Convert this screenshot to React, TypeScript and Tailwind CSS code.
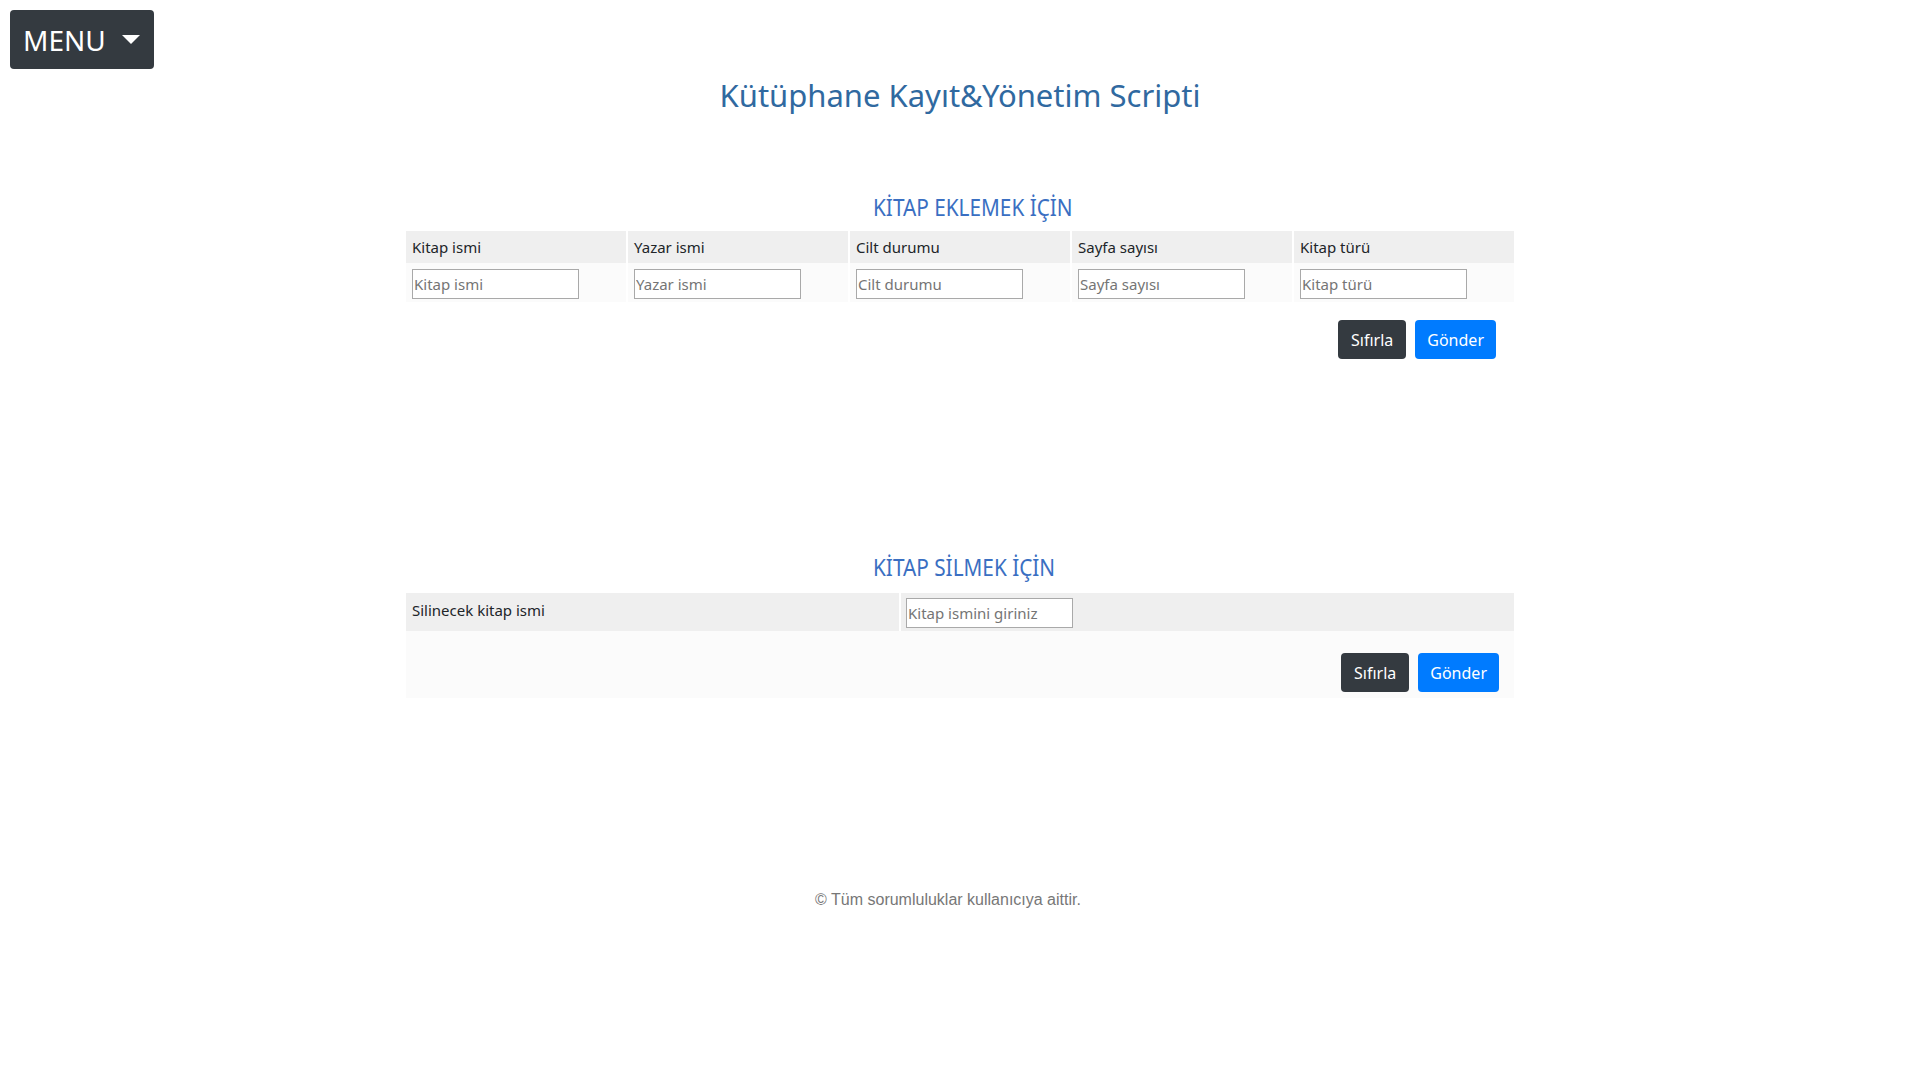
import React from 'react';

const addColumns = ['Kitap ismi', 'Yazar ismi', 'Cilt durumu', 'Sayfa sayısı', 'Kitap türü'];

const Buttons = () => (
  <div className="flex justify-end gap-[9px]">
    <button className="h-[39px] px-[13px] rounded-[4px] bg-[#343a40] text-white text-[16px]">Sıfırla</button>
    <button className="h-[39px] px-[12px] rounded-[4px] bg-[#007bff] text-white text-[16px]">Gönder</button>
  </div>
);

// heading font in the shot is a narrow one, so squeeze it a bit
const SectionTitle = ({ children }: { children: React.ReactNode }) => (
  <h3 className="pl-[467px] text-[24px] leading-[28px] text-[#3a6fc2]">
    <span className="inline-block origin-left scale-x-[0.865] whitespace-nowrap">{children}</span>
  </h3>
);

const Field = ({ placeholder }: { placeholder: string }) => (
  <input
    placeholder={placeholder}
    className="w-[167px] h-[30px] px-[1px] bg-white border border-[#a9a9a9] text-[15px] text-[#212529] placeholder:text-[#757575] outline-none"
  />
);

export default function App() {
  return (
    <div className="min-h-screen bg-white font-['Noto_Sans',sans-serif] text-[#212529]">
      <div className="pt-[10px] pl-[10px]">
        <button className="h-[59px] pl-[13px] pr-[14px] flex items-center gap-[16px] rounded-[4px] bg-[#343a40] text-white text-[28px]">
          <span>MENU</span>
          <span className="w-0 h-0 border-l-[9px] border-r-[9px] border-t-[9px] border-l-transparent border-r-transparent border-t-white" />
        </button>
      </div>

      <h1 className="mt-[6px] text-center text-[31px] leading-[40px] text-[#3069a0]">
        Kütüphane Kayıt&amp;Yönetim Scripti
      </h1>

      <main className="w-[1108px] mx-auto mt-[78px]">
        <SectionTitle>KİTAP EKLEMEK İÇİN</SectionTitle>

        <div className="mt-[10px] grid grid-cols-5 gap-x-[2px] text-[15px]">
          {addColumns.map((c) => (
            <div key={c} className="h-[32px] pl-[6px] flex items-center bg-[#efefef]">
              {c}
            </div>
          ))}
          {addColumns.map((c) => (
            <div key={c + '-in'} className="h-[39px] pl-[6px] pt-[6px] bg-[#fbfbfb]">
              <Field placeholder={c} />
            </div>
          ))}
        </div>

        <div className="mt-[18px] pr-[18px]">
          <Buttons />
        </div>

        <div className="mt-[194px]">
          <SectionTitle>KİTAP SİLMEK İÇİN</SectionTitle>
        </div>

        <div className="mt-[12px] text-[15px]">
          <div className="flex gap-x-[2px] h-[38px] bg-white">
            <div className="w-[493px] pl-[6px] pt-[6px] bg-[#efefef]">Silinecek kitap ismi</div>
            <div className="flex-1 pl-[5px] pt-[5px] bg-[#efefef]">
              <Field placeholder="Kitap ismini giriniz" />
            </div>
          </div>
          <div className="bg-[#fbfbfb] pt-[22px] pb-[6px] pr-[15px]">
            <Buttons />
          </div>
        </div>
      </main>

      <footer className="mt-[190px] pr-[24px] text-center text-[16px] leading-[24px] text-[#777777] font-['Liberation_Sans',Arial,sans-serif]">
        © Tüm sorumluluklar kullanıcıya aittir.
      </footer>
    </div>
  );
}
